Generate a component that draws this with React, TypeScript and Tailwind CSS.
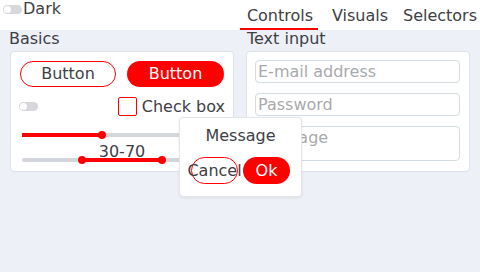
import React from "react";

const font = { fontFamily: '"DejaVu Sans", sans-serif' };

function Toggle() {
  return (
    <div className="w-[19px] h-[9px] rounded-full bg-[#d6d8dc] flex items-center pl-[1px]">
      <div className="w-[7px] h-[7px] rounded-full bg-white" />
    </div>
  );
}

function Slider({ from, to }: { from: number; to: number }) {
  return (
    <div className="relative h-[8px] w-[200px]">
      <div className="absolute left-0 right-0 top-[2px] h-[4px] rounded-full bg-[#d3d6db]" />
      <div
        className="absolute top-[2px] h-[4px] bg-[#ff0000]"
        style={{ left: `${from}%`, width: `${to - from}%` }}
      />
      {from > 0 && (
        <div className="absolute top-[0px] w-[8px] h-[8px] -ml-[4px] rounded-full bg-[#ff0000]" style={{ left: `${from}%` }} />
      )}
      <div className="absolute top-[0px] w-[8px] h-[8px] -ml-[4px] rounded-full bg-[#ff0000]" style={{ left: `${to}%` }} />
    </div>
  );
}

export default function App() {
  return (
    <div className="w-[480px] h-[272px] bg-[#edf0f7] relative overflow-hidden text-[#3e4044] text-[16px] leading-[18px]" style={font}>
      {/* header */}
      <div className="h-[30px] bg-white flex">
        <div className="flex items-center gap-[1px] pl-[3px] h-[18px]">
          <Toggle />
          <span>Dark</span>
        </div>
        <div className="ml-auto flex h-full">
          <div className="w-[80px] h-full flex flex-col items-center justify-end">
            <span className="pb-[3px]">Controls</span>
            <div className="w-[78px] h-[2px] bg-[#ff0000] self-start" />
          </div>
          <div className="w-[80px] h-full flex items-end justify-center pb-[5px]">Visuals</div>
          <div className="w-[80px] h-full flex items-end justify-center pb-[5px]">Selectors</div>
        </div>
      </div>

      {/* content */}
      <div className="flex gap-[12px] pl-[10px]">
        <div className="w-[224px] flex flex-col">
          <div className="h-[21px] -ml-[1px]">Basics</div>
          <div className="h-[121px] bg-white border border-[#dde2e9] rounded-[4px] px-[9px] pt-[9px] flex flex-col">
            <div className="flex gap-[11px]">
              <div className="w-[96px] h-[26px] rounded-full border border-[#ff0000] flex items-center justify-center">Button</div>
              <div className="w-[97px] h-[26px] rounded-full bg-[#ff0000] text-white flex items-center justify-center">Button</div>
            </div>
            <div className="flex items-center justify-between mt-[10px] -mr-[1px]">
              <div className="-ml-[1px]"><Toggle /></div>
              <div className="flex items-center gap-[5px]">
                <div className="w-[19px] h-[19px] border border-[#ff0000] rounded-[2px] bg-white" />
                <span>Check box</span>
              </div>
            </div>
            <div className="mt-[15px] ml-[2px]">
              <Slider from={0} to={40} />
            </div>
            <div className="ml-[2px] flex flex-col items-center w-[200px] mt-[6px]">
              <span className="leading-[14px]">30-70</span>
              <div className="-mt-[3px]"><Slider from={30} to={70} /></div>
            </div>
          </div>
        </div>

        <div className="w-[224px] flex flex-col">
          <div className="h-[21px] ml-[1px]">Text input</div>
          <div className="h-[121px] bg-white border border-[#dde2e9] rounded-[4px] pl-[8px] pr-[9px] pt-[8px] flex flex-col gap-[10px]">
            <input
              placeholder="E-mail address"
              className="h-[23px] w-full border border-[#d3dde2] rounded-[4px] px-[2px] outline-none placeholder:text-[#a9aaac] bg-white"
              style={font}
            />
            <input
              placeholder="Password"
              className="h-[23px] w-full border border-[#d3dde2] rounded-[4px] px-[2px] outline-none placeholder:text-[#a9aaac] bg-white"
              style={font}
            />
            <textarea
              placeholder="Message"
              className="h-[35px] w-full border border-[#d3dde2] rounded-[4px] px-[2px] py-[2px] outline-none resize-none placeholder:text-[#a9aaac] bg-white leading-[18px]"
              style={font}
            />
          </div>
        </div>
      </div>

      {/* message box */}
      <div className="absolute left-[179px] top-[117px] w-[123px] h-[80px] bg-white border border-[#e4e6ea] rounded-[4px] shadow-[0_1px_3px_rgba(0,0,0,0.08)] flex flex-col items-center pt-[9px]">
        <span>Message</span>
        <div className="flex gap-[5px] mt-[12px]">
          <div className="w-[47px] h-[27px] rounded-full border border-[#ff0000] flex items-center justify-center overflow-visible whitespace-nowrap">
            Cancel
          </div>
          <div className="w-[47px] h-[27px] rounded-full bg-[#ff0000] text-white flex items-center justify-center">Ok</div>
        </div>
      </div>
    </div>
  );
}
